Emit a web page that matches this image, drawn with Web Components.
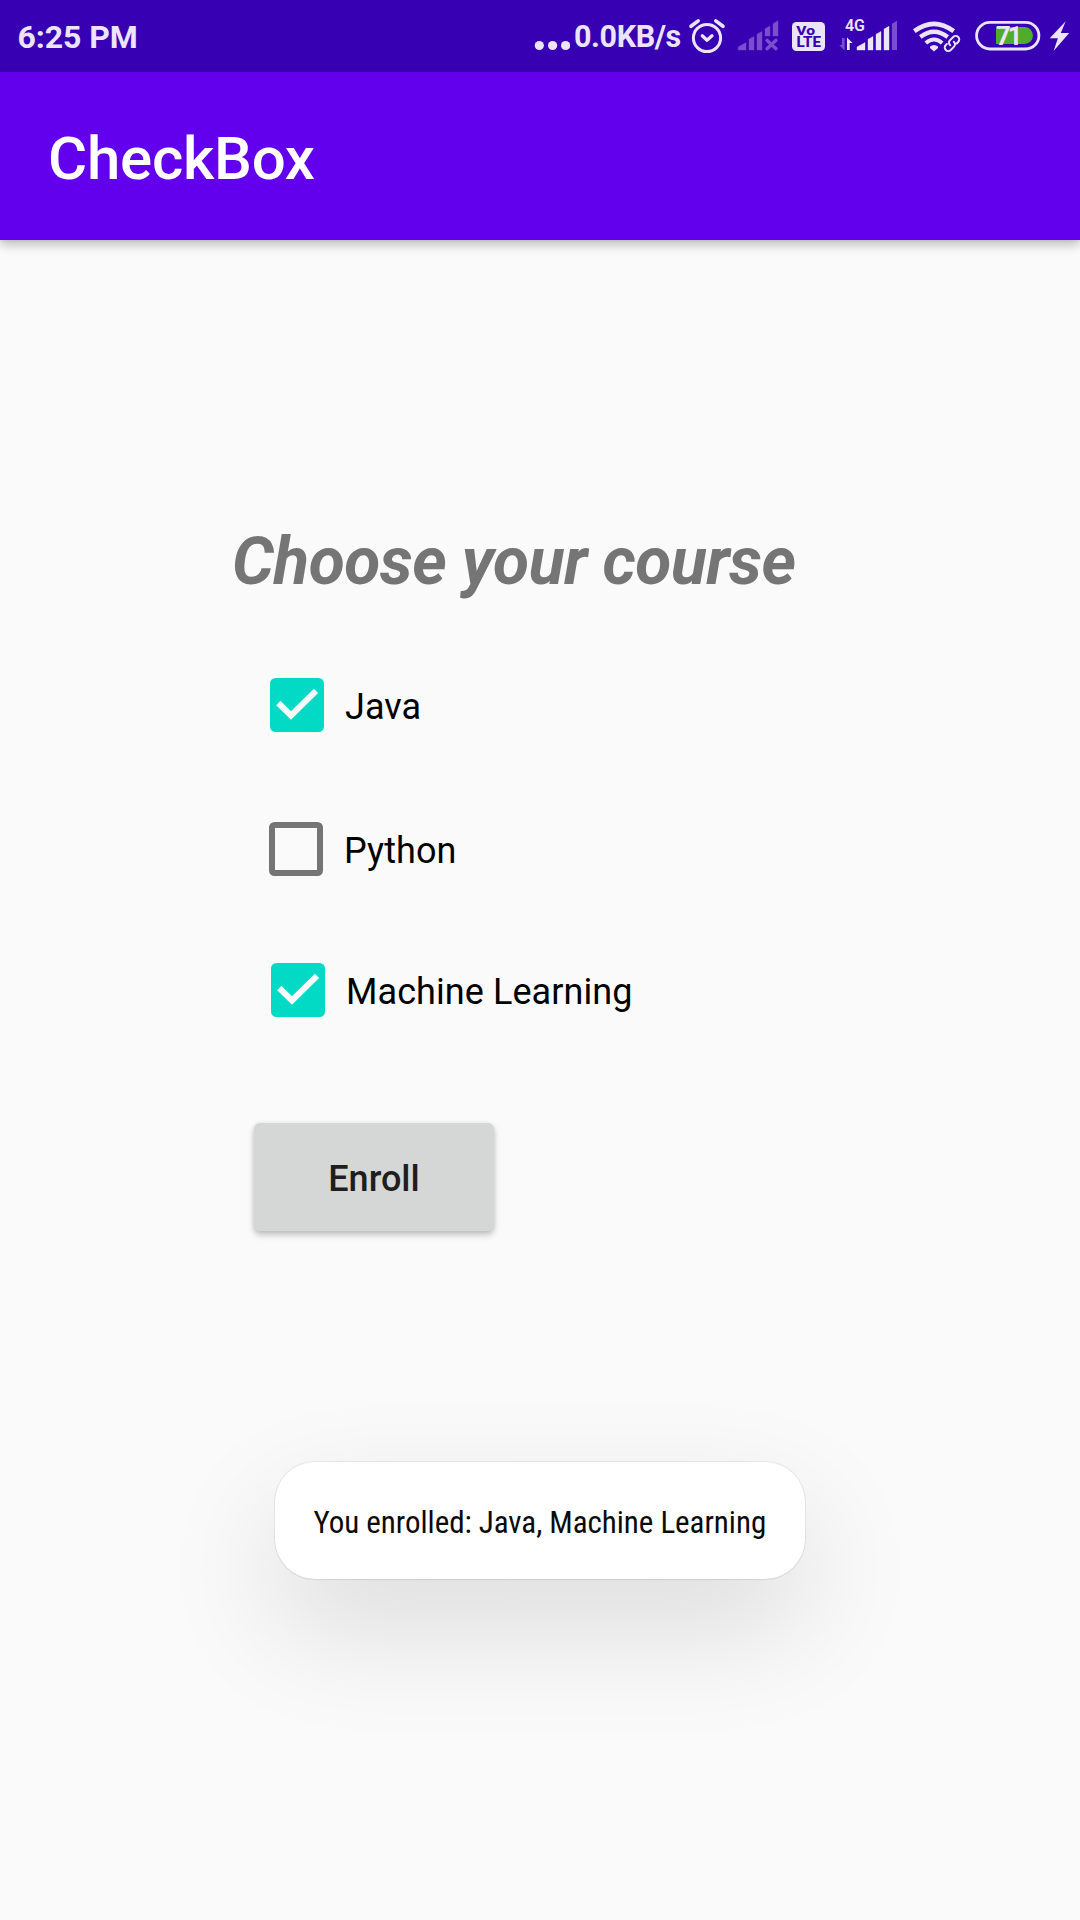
<!DOCTYPE html>
<html lang="en">
<head>
<meta charset="utf-8">
<title>CheckBox</title>
<style>
  html, body { margin: 0; padding: 0; }
  body { width: 1080px; height: 1920px; overflow: hidden; background: #fafafa; font-family: Roboto, sans-serif; color: #000; }
</style>
</head>
<body>

<template id="t-status">
  <style>
    :host { display: flex; align-items: center; height: 72px; background: #3700b3; color: #ece4fb; padding: 0 11px 0 17.6px; box-sizing: border-box; }
    svg { display: block; flex: none; height: 72px; fill: currentColor; }
    .time { font: 700 32px/72px Roboto, sans-serif; padding-top: 2px; margin-right: auto; white-space: nowrap; letter-spacing: -.1px; }
    .speed { font: 700 30.500px/72px Roboto, sans-serif; padding-top: 2px; width: 107px; margin-left: 4px; letter-spacing: -.4px; white-space: nowrap; }
    .line { fill: none; stroke: currentColor; stroke-linecap: round; stroke-linejoin: round; }
    .alarm { margin: 0 4px 0 6px; }
    .dim { fill: #7b4dd0; }
    text { font-family: Roboto, sans-serif; }
  </style>
  <span class="time"><slot name="time"></slot></span>
  <!-- overflow dots -->
  <svg width="36" viewBox="534 0 36 72"><circle cx="539.3" cy="45.5" r="4.6"/><circle cx="552.6" cy="45.5" r="4.6"/><circle cx="565.6" cy="45.5" r="4.6"/></svg>
  <span class="speed"><slot name="speed"></slot></span>
  <!-- alarm -->
  <svg class="alarm" width="42" viewBox="687 0 42 72"><g class="line"><circle cx="707" cy="38" r="13.6" stroke-width="3"/><path d="M702.3 35.8l4.7 4.4 5-4.4" stroke-width="3.3"/><path d="M691 26.300l7.200-5.400M715.800 20.900l7.200 5.400" stroke-width="3.600"/></g></svg>
  <!-- inactive SIM -->
  <svg width="49" viewBox="733 0 49 72"><g class="dim"><path d="M738.200 50v-3l7.800-4.500V50zM749 50V39.200l5-2.700V50zM757 50V34.200l5-2.700V50zM765 36v-7.200l5-2.800v10zM773 36V23.700l5-3V36z" stroke="#7b4dd0" stroke-width=".4" stroke-linejoin="round"/></g><path d="M767 40.300l9 8.400M776 40.300l-9 8.400" fill="none" stroke="#7b4dd0" stroke-width="3.400" stroke-linecap="round"/></svg>
  <!-- VoLTE -->
  <svg width="52" viewBox="782 0 52 72"><rect x="792" y="22" width="33" height="29" rx="4.500"/><text x="796.300" y="34.500" font-size="12.600" font-weight="800" fill="#3700b3" textLength="18.800" lengthAdjust="spacingAndGlyphs">Vo</text><text x="796.500" y="47.300" font-size="14" font-weight="800" fill="#3700b3" textLength="24.500" lengthAdjust="spacingAndGlyphs">LTE</text></svg>
  <!-- 4G signal -->
  <svg width="70" viewBox="834 0 70 72"><text x="845" y="31" font-size="16" font-weight="600" textLength="20" lengthAdjust="spacingAndGlyphs">4G</text><path class="dim" d="M842 38h2.600v12.500l-5.400-5.500h2.800z"/><path d="M847 50V37.500l5.600 5.500h-2.900V50z"/><path d="M857 50v-3l8-4.500V50zM868 50V39.200l5-2.700V50zM876 50V34.200l5-2.700V50zM884 50V29l5-2.700V50z" stroke="currentColor" stroke-width=".4" stroke-linejoin="round"/><path class="dim" d="M892 50V23.700l5-3V50z"/></svg>
  <!-- Wi-Fi with link -->
  <svg width="62" viewBox="904 0 62 72"><g class="line" style="stroke-linecap:butt"><path d="M914.300 31.200Q934 16.500 953.700 31.200" stroke-width="4.600"/><path d="M920.300 37Q934 26.500 947.700 37" stroke-width="4.200"/><path d="M925.800 43Q934 36 942.200 43" stroke-width="4"/></g><path d="M930 46.400q4-3 8 0v1.600l-4 3.600-4-3.600z"/><g class="line" stroke-width="2" transform="rotate(-45 952 43.500)"><path d="M949.500 43.500v-.5a3.200 3.200 0 0 1 3.200-3.200h4.800a3.500 3.500 0 0 1 0 7h-2.200M954.500 43.500v.5a3.200 3.200 0 0 1-3.200 3.200h-4.800a3.500 3.500 0 0 1 0-7h1.500"/></g></svg>
  <!-- battery -->
  <svg width="80" viewBox="966 0 80 72"><rect x="976.600" y="22.400" width="62.300" height="26.600" rx="13.300" class="line" stroke-width="2.800"/><path d="M996 27h28.500a8.500 8.500 0 0 1 0 17H996z" fill="#4fad29"/><text x="996" y="45" font-size="25.500" font-weight="700" textLength="26.500" lengthAdjust="spacing">71</text></svg>
  <!-- charging -->
  <svg width="23" viewBox="1046 0 23 72"><path d="M1065.700 21.300l-16 17h8.200l-4.300 12.700 15.600-18h-8.400z"/></svg>
</template>

<template id="t-appbar">
  <style>
    :host { display: flex; align-items: center; height: 168px; box-sizing: border-box; padding: 5px 48px 0; background: #6200ee; box-shadow: 0 5px 10px rgba(0,0,0,.24), 0 0 4px rgba(0,0,0,.1); color: #fff; font: 500 60px/70px Roboto, sans-serif; letter-spacing: -.25px; }
  </style>
  <slot></slot>
</template>

<template id="t-check">
  <style>
    :host { display: flex; align-items: center; height: 54px; font: 400 36px/42px Roboto, sans-serif; color: #000; }
    svg { display: block; flex: none; width: 54px; height: 54px; margin-right: 21px; }
    .on { display: none; }
    :host([checked]) .on { display: inline; }
    :host([checked]) .off { display: none; }
    span { padding-top: 4px; white-space: nowrap; letter-spacing: .08px; }
  </style>
  <svg viewBox="0 0 54 54">
    <rect class="off" x="3" y="3" width="48" height="48" rx="2.500" fill="none" stroke="#757575" stroke-width="6"/>
    <g class="on"><rect width="54" height="54" rx="5.500" fill="#03dac5"/><path d="M8.300 25L21 37.500 46 12.800" fill="none" stroke="#fafafa" stroke-width="6"/></g>
  </svg>
  <span><slot></slot></span>
</template>

<template id="t-button">
  <style>
    :host { display: flex; width: 240px; height: 108px; }
    button { all: unset; box-sizing: border-box; width: 100%; padding-top: 4px; text-align: center; border-radius: 6px; background: #d5d7d6; color: #1d1e1d; font: 500 36px/104px Roboto, sans-serif; box-shadow: 0 4px 6px rgba(0,0,0,.22), 0 0 4px rgba(0,0,0,.08); }
  </style>
  <button><slot></slot></button>
</template>

<template id="t-toast">
  <style>
    :host { position: absolute; left: 275px; top: 1462px; width: 530px; height: 117px; box-sizing: border-box; padding: 4px 0 0 38.500px; border-radius: 40px; display: flex; align-items: center; background: #fff; color: #0b0b0b; font: 400 31px/37px "Roboto Condensed", Roboto, sans-serif; font-stretch: 75%; letter-spacing: -.03px; white-space: nowrap; box-shadow: 0 0 0 1px rgba(0,0,0,.06), 0 1px 2px rgba(0,0,0,.04), 0 48px 116px rgba(0,0,0,.125); }
  </style>
  <slot></slot>
</template>

<template id="t-form">
  <style>
    :host { display: flex; flex-direction: column; align-items: flex-start; padding: 281px 0 0 254px; }
    h1 { margin: 0 0 76px -22px; font: italic 700 66px/81px Roboto, sans-serif; letter-spacing: -.55px; color: #757575; white-space: nowrap; }
    .list { display: flex; flex-direction: column; }
    ::slotted(check-option:nth-of-type(1)) { margin: 0 0 90px 16px; }
    ::slotted(check-option:nth-of-type(2)) { margin: 0 0 87px 15px; }
    ::slotted(check-option:nth-of-type(3)) { margin: 0 0 106px 17px; }
  </style>
  <h1><slot name="heading"></slot></h1>
  <div class="list"><slot></slot></div>
  <slot name="action"></slot>
</template>

<template id="t-screen">
  <style>
    :host { display: flex; flex-direction: column; position: relative; width: 1080px; height: 1920px; background: #fafafa; overflow: hidden; }
  </style>
  <slot></slot>
</template>

<phone-screen>
  <status-bar><span slot="time">6:25 PM</span><span slot="speed">0.0KB/s</span></status-bar>
  <app-bar>CheckBox</app-bar>
  <course-form>
    <span slot="heading">Choose your course</span>
    <check-option checked>Java</check-option>
    <check-option>Python</check-option>
    <check-option checked>Machine Learning</check-option>
    <raised-button slot="action">Enroll</raised-button>
  </course-form>
  <toast-message>You enrolled: Java, Machine Learning</toast-message>
</phone-screen>

<script>
  class TemplateElement extends HTMLElement {
    constructor() {
      super();
      const template = document.getElementById(this.constructor.template);
      this.attachShadow({ mode: 'open' }).append(template.content.cloneNode(true));
    }
  }
  class PhoneScreen extends TemplateElement { static template = 't-screen'; }
  class StatusBar extends TemplateElement { static template = 't-status'; }
  class AppBar extends TemplateElement { static template = 't-appbar'; }
  class CourseForm extends TemplateElement { static template = 't-form'; }
  class CheckOption extends TemplateElement {
    static template = 't-check';
    connectedCallback() {
      this.setAttribute('role', 'checkbox');
      this.addEventListener('click', () => this.toggleAttribute('checked'));
    }
  }
  class RaisedButton extends TemplateElement { static template = 't-button'; }
  class ToastMessage extends TemplateElement { static template = 't-toast'; }
  customElements.define('phone-screen', PhoneScreen);
  customElements.define('status-bar', StatusBar);
  customElements.define('app-bar', AppBar);
  customElements.define('course-form', CourseForm);
  customElements.define('check-option', CheckOption);
  customElements.define('raised-button', RaisedButton);
  customElements.define('toast-message', ToastMessage);
</script>
</body>
</html>
